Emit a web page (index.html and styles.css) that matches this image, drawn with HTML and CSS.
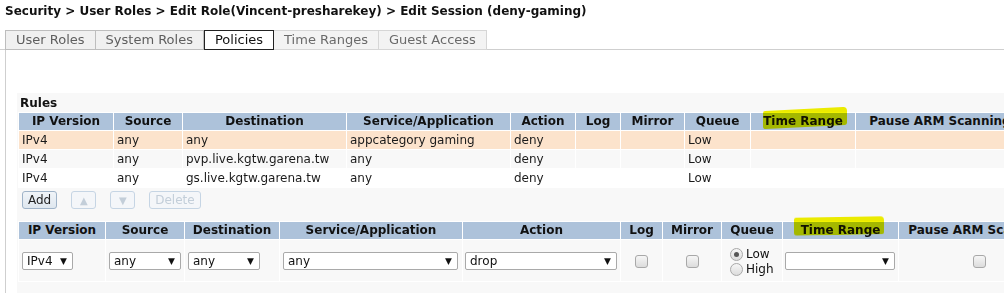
FILE: index.html
```html
<!DOCTYPE html>
<html lang="en">
<head>
  <meta charset="UTF-8">
  <title>Edit Session</title>
  <link rel="stylesheet" href="styles.css">
</head>
<body>
  <h1 class="crumb">Security &gt; User Roles &gt; Edit Role(Vincent-presharekey) &gt; Edit Session (deny-gaming)</h1>

  <div class="tabs">
    <div class="tab">User Roles</div>
    <div class="tab">System Roles</div>
    <div class="tab active">Policies</div>
    <div class="tab light">Time Ranges</div>
    <div class="tab light">Guest Access</div>
  </div>

  <div class="panel">
    <div class="box">
      <h3 class="box-title">Rules</h3>
      <table class="grid rules">
        <tr>
          <th class="w94">IP Version</th>
          <th class="w68">Source</th>
          <th class="w163">Destination</th>
          <th class="w163">Service/Application</th>
          <th class="w64">Action</th>
          <th class="w44">Log</th>
          <th class="w63">Mirror</th>
          <th class="w65">Queue</th>
          <th class="w104 marked">Time Range<span class="marker m1"></span></th>
          <th class="w168">Pause ARM Scanning</th>
        </tr>
        <tr class="selected">
          <td>IPv4</td><td>any</td><td>any</td><td>appcategory gaming</td><td>deny</td><td></td><td></td><td>Low</td><td></td><td></td>
        </tr>
        <tr class="odd">
          <td>IPv4</td><td>any</td><td>pvp.live.kgtw.garena.tw</td><td>any</td><td>deny</td><td></td><td></td><td>Low</td><td></td><td></td>
        </tr>
        <tr class="even">
          <td>IPv4</td><td>any</td><td>gs.live.kgtw.garena.tw</td><td>any</td><td>deny</td><td></td><td></td><td>Low</td><td></td><td></td>
        </tr>
      </table>

      <div class="actions">
        <button class="btn">Add</button>
        <button class="btn off arrow">&#9650;</button>
        <button class="btn off arrow">&#9660;</button>
        <button class="btn off">Delete</button>
      </div>

      <table class="grid editor">
        <tr>
          <th class="w86">IP Version</th>
          <th class="w77">Source</th>
          <th class="w94">Destination</th>
          <th class="w182">Service/Application</th>
          <th class="w157">Action</th>
          <th class="w41">Log</th>
          <th class="w58">Mirror</th>
          <th class="w60">Queue</th>
          <th class="w114 marked">Time Range<span class="marker m2"></span></th>
          <th class="w160">Pause ARM Scanning</th>
        </tr>
        <tr>
          <td><div class="select s-ip"><span>IPv4</span><i>&#9660;</i></div></td>
          <td><div class="select s-src"><span>any</span><i>&#9660;</i></div></td>
          <td><div class="select s-src"><span>any</span><i>&#9660;</i></div></td>
          <td><div class="select s-svc"><span>any</span><i>&#9660;</i></div></td>
          <td><div class="select s-act"><span>drop</span><i>&#9660;</i></div></td>
          <td class="center"><span class="check"></span></td>
          <td class="center"><span class="check"></span></td>
          <td class="queue">
            <label class="radio-row"><span class="radio on"></span>Low</label>
            <label class="radio-row"><span class="radio"></span>High</label>
          </td>
          <td><div class="select s-time"><span></span><i>&#9660;</i></div></td>
          <td class="center"><span class="check"></span></td>
        </tr>
      </table>
    </div>
  </div>
</body>
</html>
```

FILE: styles.css
```css
* {
  box-sizing: border-box;
}
body {
  margin: 0;
  background-color: white;
  font-family: "DejaVu Sans", Verdana, sans-serif;
  font-size: 12px;
  color: #1a1a1a;
  overflow: hidden;
}
.crumb {
  margin: 0;
  padding: 3px 5px 0;
  font-size: 12px;
  line-height: 16px;
  color: #111;
  white-space: nowrap;
}
.tabs {
  display: flex;
  margin-top: 11px;
  padding-left: 5px;
  border-bottom: 1px solid #cfcfcf;
}
.tab {
  height: 20px;
  padding: 0 10px;
  margin-bottom: -1px;
  border: 1px solid #bdbdbd;
  border-left: none;
  background-color: #f0f0f0;
  color: #5e5e5e;
  font-size: 13px;
  line-height: 18px;
}
.tab:first-child {
  border-left: 1px solid #bdbdbd;
}
.tab.active {
  background-color: white;
  color: #111;
  border: 1px solid #222;
}
.tab.light {
  background-color: #f3f3f3;
  color: #6a6a6a;
  border-color: #d6d6d6;
}
.panel {
  margin-left: 5px;
  border-left: 1px solid #cfcfcf;
  padding: 43px 0 0 11px;
  height: 243px;
  overflow: hidden;
}
.box {
  background-color: #f8f8f8;
  width: 1200px;
  height: 200px;
  padding-top: 2px;
}
.box-title {
  margin: 0 0 0 3px;
  font-size: 12px;
  line-height: 17px;
  color: #111;
}
.grid {
  border-collapse: separate;
  border-spacing: 1px;
  margin-left: 1px;
  background-color: white;
  white-space: nowrap;
}
.grid th {
  position: relative;
  height: 17px;
  padding: 0;
  background-color: #adc2da;
  color: #111;
  font-size: 12px;
  line-height: 17px;
  text-align: center;
}
.grid td {
  height: 18px;
  padding: 0 3px;
  line-height: 18px;
  vertical-align: middle;
}
.rules tr.selected td {
  background-color: #fce3cc;
}
.rules tr.odd td {
  background-color: #f8f8f8;
}
.rules tr.even td {
  background-color: white;
}

.w94 { width: 94px; }
.w68 { width: 68px; }
.w163 { width: 163px; }
.w64 { width: 64px; }
.w44 { width: 44px; }
.w63 { width: 63px; }
.w65 { width: 65px; }
.w104 { width: 104px; }
.w168 { width: 168px; }
.w86 { width: 86px; }
.w77 { width: 77px; }
.w182 { width: 182px; }
.w157 { width: 157px; }
.w41 { width: 41px; }
.w58 { width: 58px; }
.w60 { width: 60px; }
.w114 { width: 114px; }
.w160 { width: 160px; }

/* highlighter strokes someone drew on the screenshot */
.marker {
  position: absolute;
  background-color: #f2f200;
  mix-blend-mode: multiply;
  border-radius: 2px 4px 2px 3px;
}
.m1 {
  left: 12px;
  top: -4px;
  width: 84px;
  height: 18px;
  transform: skewY(-3deg);
}
.m2 {
  left: 11px;
  top: -5px;
  width: 90px;
  height: 18px;
  transform: skewY(-1deg);
}

.actions {
  display: flex;
  gap: 14px;
  margin: 3px 0 12px 5px;
}
.btn {
  height: 18px;
  padding: 0 5px;
  border: 1px solid #9fb3c8;
  border-radius: 3px;
  background: linear-gradient(#f0f4f8, #dfe7ef);
  font-family: inherit;
  font-size: 12px;
  line-height: 15px;
  color: #222;
}
.btn.off {
  border-color: #c6d5e4;
  background: #f4f6f9;
  color: #c3ced9;
}
.btn.arrow {
  width: 25px;
  font-size: 10px;
}

.editor td {
  height: 41px;
  background-color: #f8f8f8;
}
.editor td.center {
  text-align: center;
}
.select {
  display: flex;
  align-items: center;
  justify-content: space-between;
  height: 18px;
  padding: 0 5px 0 4px;
  border: 1px solid #a9a9a9;
  border-radius: 2px;
  background-color: white;
  color: #111;
  line-height: 16px;
}
.select i {
  font-style: normal;
  font-size: 9px;
  color: #111;
}
.s-ip { width: 51px; }
.s-src { width: 72px; }
.s-svc { width: 175px; }
.s-act { width: 152px; margin-left: -1px; }
.s-time { width: 110px; margin-left: -1px; }
.check {
  display: inline-block;
  width: 13px;
  height: 13px;
  vertical-align: middle;
  border: 1px solid #a8a8a8;
  border-radius: 3px;
  background: linear-gradient(#f6f6f6, #dcdcdc);
}
.editor td.queue {
  padding: 3px 0 0 8px;
  line-height: 15px;
}
.radio-row {
  display: flex;
  align-items: center;
  gap: 3px;
  font-size: 12px;
  color: #111;
}
.radio {
  display: inline-block;
  position: relative;
  width: 13px;
  height: 13px;
  border: 1px solid #a8a8a8;
  border-radius: 50%;
  background: linear-gradient(#f6f6f6, #dcdcdc);
}
.radio.on::after {
  content: "";
  position: absolute;
  left: 3px;
  top: 3px;
  width: 5px;
  height: 5px;
  border-radius: 50%;
  background-color: #555;
}
```
